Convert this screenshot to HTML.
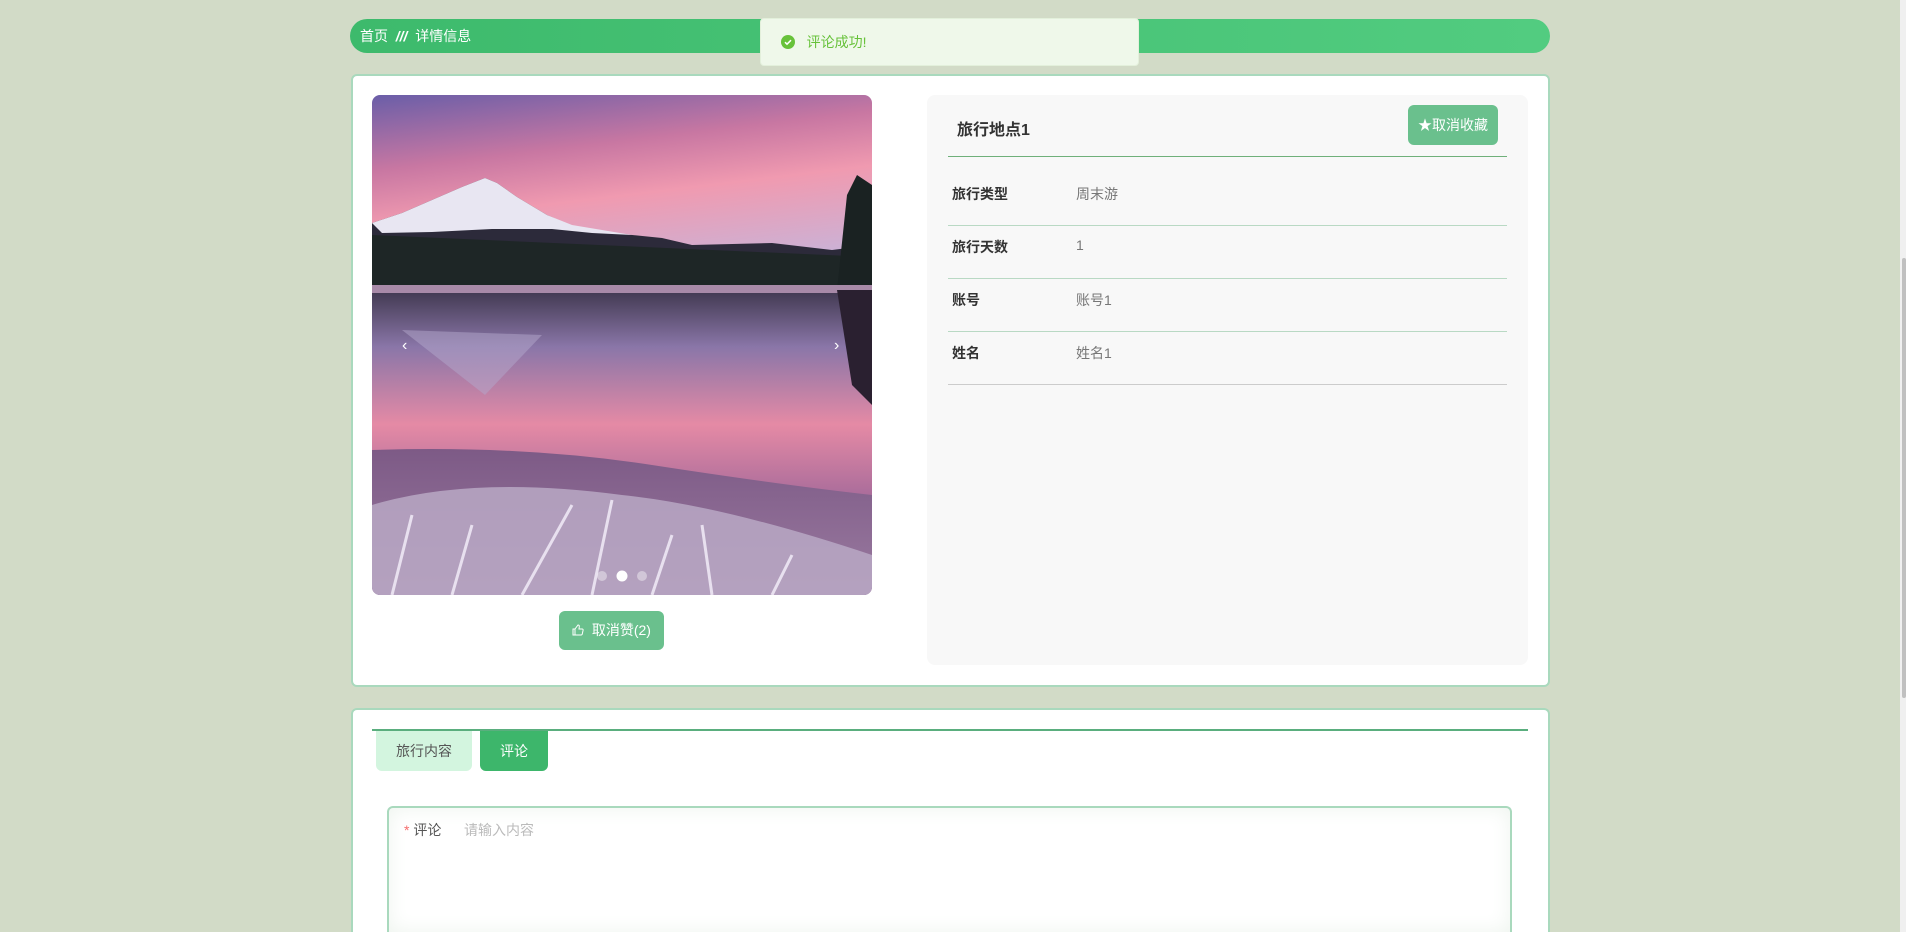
<!DOCTYPE html>
<html style="width:1906px;height:932px;overflow:hidden"><head><meta charset="utf-8"><style>
*{box-sizing:border-box;margin:0;padding:0}
body{width:1906px;height:932px;overflow:hidden;background:#d2dbc7;font-family:"Liberation Sans","Noto Sans CJK SC",sans-serif;position:relative}
#wrap{position:absolute;left:0;top:0;width:1906px;height:932px;overflow:hidden}
.abs{position:absolute}
.bc{left:350px;top:19px;width:1200px;height:34px;border-radius:17px;background:linear-gradient(90deg,#3dba6c,#52cc80);color:#fff;font-size:14px;line-height:34px;padding-left:10px}
.toast{left:760px;top:18px;width:379px;height:48px;background:#eff8ea;border:1px solid #e3f0db;border-radius:4px;color:#67c23a;font-size:14px;line-height:46px;padding-left:20px}
.card{background:#fff;border:2px solid #a9d9bd;border-radius:6px}
.panel{left:927px;top:95px;width:601px;height:570px;background:#f8f8f8;border-radius:8px}
.lbl{font-size:14px;font-weight:bold;color:#333}
.val{font-size:14px;color:#777}
.sep{height:1px;background:#b9d9c4;left:948px;width:559px}
</style></head><body><div id="wrap">
<div class="abs bc">首页 &nbsp;<b style="font-style:italic">///</b>&nbsp; 详情信息</div>

<div class="abs card" style="left:351px;top:74px;width:1199px;height:613px"></div>
<div class="abs" style="left:372px;top:95px;width:500px;height:500px;border-radius:8px;overflow:hidden">
<svg width="500" height="500" viewBox="0 0 500 500">
<defs>
<linearGradient id="sky" x1="0" y1="0" x2="0.3" y2="1"><stop offset="0" stop-color="#6a5ea8"/><stop offset="0.35" stop-color="#c877a2"/><stop offset="0.6" stop-color="#f09ab0"/><stop offset="1" stop-color="#c9b3d8"/></linearGradient>
<linearGradient id="lake" x1="0" y1="0" x2="0" y2="1"><stop offset="0" stop-color="#3a3348"/><stop offset="0.2" stop-color="#8a76a8"/><stop offset="0.45" stop-color="#e58aa5"/><stop offset="0.7" stop-color="#a56a9a"/><stop offset="1" stop-color="#8a6690"/></linearGradient>
<linearGradient id="shore" x1="0" y1="0" x2="0" y2="1"><stop offset="0" stop-color="#7d5a86"/><stop offset="1" stop-color="#9a7aa0"/></linearGradient>
</defs>
<rect width="500" height="200" fill="url(#sky)"/>
<path d="M0 128 L30 118 L60 105 L90 92 L113 83 L125 88 L145 102 L175 120 L210 135 L290 143 L320 150 L400 148 L460 155 L500 150 L500 200 L0 200Z" fill="#2c2a3a"/>
<path d="M0 128 L30 118 L60 105 L90 92 L113 83 L125 88 L145 102 L175 120 L200 130 L260 140 L220 138 L180 134 L120 134 L60 137 L10 138Z" fill="#e8e6f2"/>
<path d="M0 140 L500 162 L500 192 L0 192Z" fill="#1e2626"/>
<path d="M465 195 L475 100 L485 80 L500 90 L500 195Z" fill="#1a2222"/>
<rect y="190" width="500" height="310" fill="url(#lake)"/>
<path d="M30 235 L113 300 L170 240 Z" fill="#b4a8cc" opacity="0.5"/>
<rect y="190" width="500" height="8" fill="#a88aa8"/>
<path d="M465 195 L500 195 L500 310 L480 290Z" fill="#2a2030"/>
<path d="M0 355 Q150 350 280 370 T500 400 L500 500 L0 500Z" fill="url(#shore)"/>
<path d="M0 410 Q100 380 250 400 Q350 410 500 460 L500 500 L0 500Z" fill="#b9a8c4" opacity="0.85"/>
<path d="M20 500 L40 420 M80 500 L100 430 M150 500 L200 410 M220 500 L240 405 M280 500 L300 440 M340 500 L330 430 M400 500 L420 460" stroke="#e8e0ef" stroke-width="3" fill="none"/>
<circle cx="230" cy="481" r="5" fill="#fff" opacity="0.4"/><circle cx="250" cy="481" r="5.5" fill="#fff"/><circle cx="270" cy="481" r="5" fill="#fff" opacity="0.4"/>
<text x="30" y="255" fill="#fff" font-size="16">‹</text><text x="462" y="255" fill="#fff" font-size="16">›</text>
</svg></div>
<div class="abs" style="left:559px;top:611px;width:105px;height:39px;background:#6ac08d;border-radius:6px;color:#fff;font-size:14px;line-height:39px;text-align:center">
<svg width="12" height="12" viewBox="0 0 12 12" style="vertical-align:-1px"><path d="M1 5h2v6H1zM3 5l3-4c1 0 1.5.6 1.3 1.6L7 5h3.2c.6 0 1 .5.9 1.1l-.9 4.2c-.1.4-.5.7-.9.7H3" fill="none" stroke="#fff" stroke-width="1"/></svg>&nbsp; 取消赞(2)</div>

<div class="abs panel"></div>
<div class="abs" style="left:957px;top:116px;font-size:16px;font-weight:bold;color:#333">旅行地点1</div>
<div class="abs" style="left:1408px;top:105px;width:90px;height:40px;background:#6ac08d;border-radius:6px;color:#fff;font-size:14px;line-height:40px;text-align:center">★取消收藏</div>
<div class="abs" style="left:948px;top:156px;width:559px;height:1px;background:#6fb07a"></div>
<div class="abs lbl" style="left:952px;top:184px">旅行类型</div><div class="abs val" style="left:1076px;top:184px">周末游</div>
<div class="abs sep" style="top:225px"></div>
<div class="abs lbl" style="left:952px;top:237px">旅行天数</div><div class="abs val" style="left:1076px;top:237px">1</div>
<div class="abs sep" style="top:278px"></div>
<div class="abs lbl" style="left:952px;top:290px">账号</div><div class="abs val" style="left:1076px;top:290px">账号1</div>
<div class="abs sep" style="top:331px"></div>
<div class="abs lbl" style="left:952px;top:343px">姓名</div><div class="abs val" style="left:1076px;top:343px">姓名1</div>
<div class="abs sep" style="top:384px;background:#ccc"></div>

<div class="abs card" style="left:351px;top:708px;width:1199px;height:224px;border-bottom:none;border-radius:6px 6px 0 0"></div>
<div class="abs" style="left:372px;top:729px;width:1156px;height:2px;background:#5aae7e"></div>
<div class="abs" style="left:376px;top:731px;width:96px;height:40px;background:#d3f5df;border-radius:0 0 6px 6px;color:#555;font-size:14px;line-height:40px;text-align:center">旅行内容</div>
<div class="abs" style="left:480px;top:731px;width:68px;height:40px;background:#3db66b;border-radius:0 0 6px 6px;color:#fff;font-size:14px;line-height:40px;text-align:center">评论</div>
<div class="abs" style="left:387px;top:806px;width:1125px;height:126px;border:2px solid #a9d9bd;border-bottom:none;border-radius:6px 6px 0 0;background:#fff;box-shadow:inset 0 0 20px #eef4ee"></div>
<div class="abs" style="left:404px;top:820px;font-size:14px;color:#555"><span style="color:#f56c6c">*</span> 评论</div>
<div class="abs" style="left:464px;top:820px;font-size:14px;color:#bbb">请输入内容</div>

<div class="abs toast"><svg width="14" height="14" viewBox="0 0 14 14" style="vertical-align:-2px"><circle cx="7" cy="7" r="7" fill="#67c23a"/><path d="M4 7.2l2 2 4-4" stroke="#fff" stroke-width="1.5" fill="none"/></svg>&nbsp;&nbsp; 评论成功!</div>
<div class="abs" style="left:1900px;top:0;width:6px;height:932px;background:#f0f0f0"></div>
<div class="abs" style="left:1902px;top:258px;width:4px;height:440px;background:#c0c0c0;border-radius:2px"></div>
</div></body></html>
